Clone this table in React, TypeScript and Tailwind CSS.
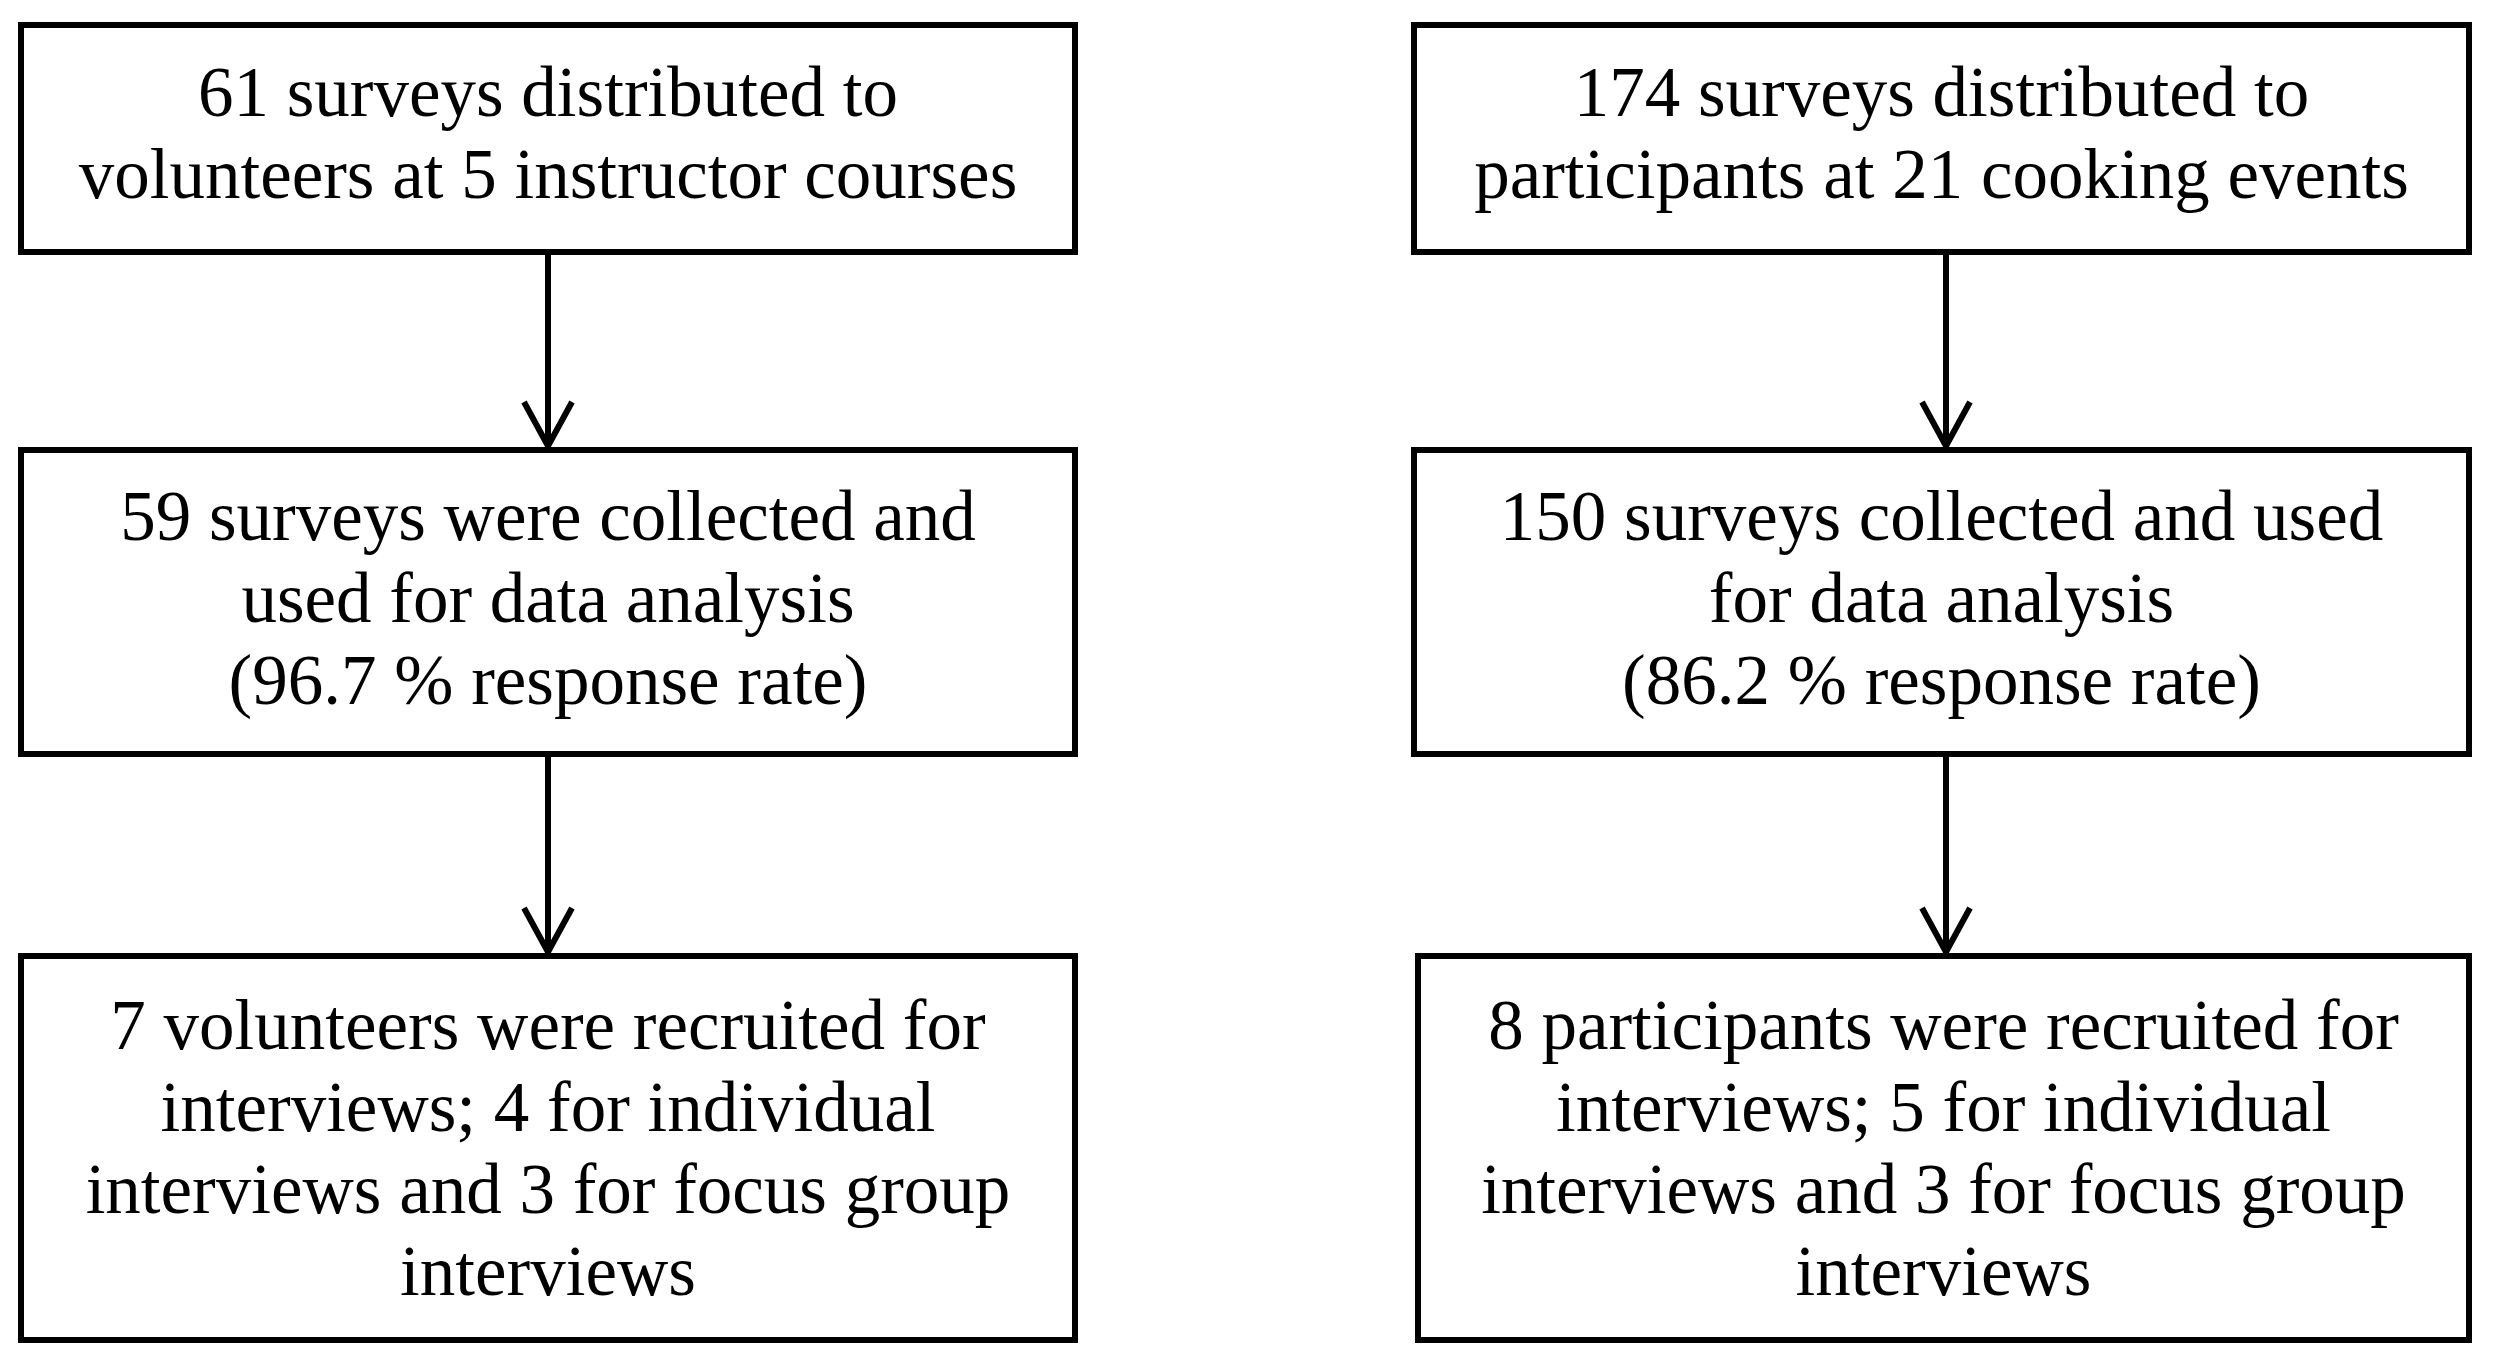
import React from "react";

function Arrow({ h, shift = 0 }: { h: number; shift?: number }) {
  return (
    <div className="flex justify-center" style={{ height: h, paddingLeft: shift * 2 }}>
      <svg width="60" height={h} viewBox={`0 0 60 ${h}`} className="block">
        <line x1="30" y1="0" x2="30" y2={h} stroke="#000" strokeWidth="6" />
        <polyline
          points={`6,${h - 45} 30,${h - 1} 54,${h - 45}`}
          fill="none"
          stroke="#000"
          strokeWidth="6"
          strokeLinejoin="miter"
        />
      </svg>
    </div>
  );
}

function Box({
  lines,
  hClass,
  extra = "",
}: {
  lines: string[];
  hClass: string;
  extra?: string;
}) {
  return (
    <div
      className={`flex flex-col items-center justify-center border-[6px] border-black bg-white text-center text-black whitespace-nowrap ${hClass} ${extra}`}
    >
      {lines.map((l, i) => (
        <div key={i} className="leading-[82px]">
          {l}
        </div>
      ))}
    </div>
  );
}

export default function App() {
  return (
    <div
      className="w-[2495px] h-[1363px] bg-white overflow-hidden flex pt-[22px] pl-[18px] gap-[333px] text-[71px]"
      style={{ fontFamily: '"Liberation Serif", "Times New Roman", serif' }}
    >
      <div className="flex flex-col w-[1060px]">
        <Box
          hClass="h-[233px] pb-[12px]"
          lines={["61 surveys distributed to", "volunteers at 5 instructor courses"]}
        />
        <Arrow h={192} />
        <Box
          hClass="h-[310px] pb-[9px]"
          lines={[
            "59 surveys were collected and",
            "used for data analysis",
            "(96.7 % response rate)",
          ]}
        />
        <Arrow h={196} />
        <Box
          hClass="h-[390px]"
          lines={[
            "7 volunteers were recruited for",
            "interviews; 4 for individual",
            "interviews and 3 for focus group",
            "interviews",
          ]}
        />
      </div>
      <div className="flex flex-col w-[1061px]">
        <Box
          hClass="h-[233px] pb-[12px]"
          lines={["174 surveys distributed to", "participants at 21 cooking events"]}
        />
        <Arrow h={192} shift={4} />
        <Box
          hClass="h-[310px] pb-[9px]"
          lines={[
            "150 surveys collected and used",
            "for data analysis",
            "(86.2 % response rate)",
          ]}
        />
        <Arrow h={196} shift={4} />
        <Box
          hClass="h-[390px]"
          extra="ml-[4px]"
          lines={[
            "8 participants were recruited for",
            "interviews; 5 for individual",
            "interviews and 3 for focus group",
            "interviews",
          ]}
        />
      </div>
    </div>
  );
}
